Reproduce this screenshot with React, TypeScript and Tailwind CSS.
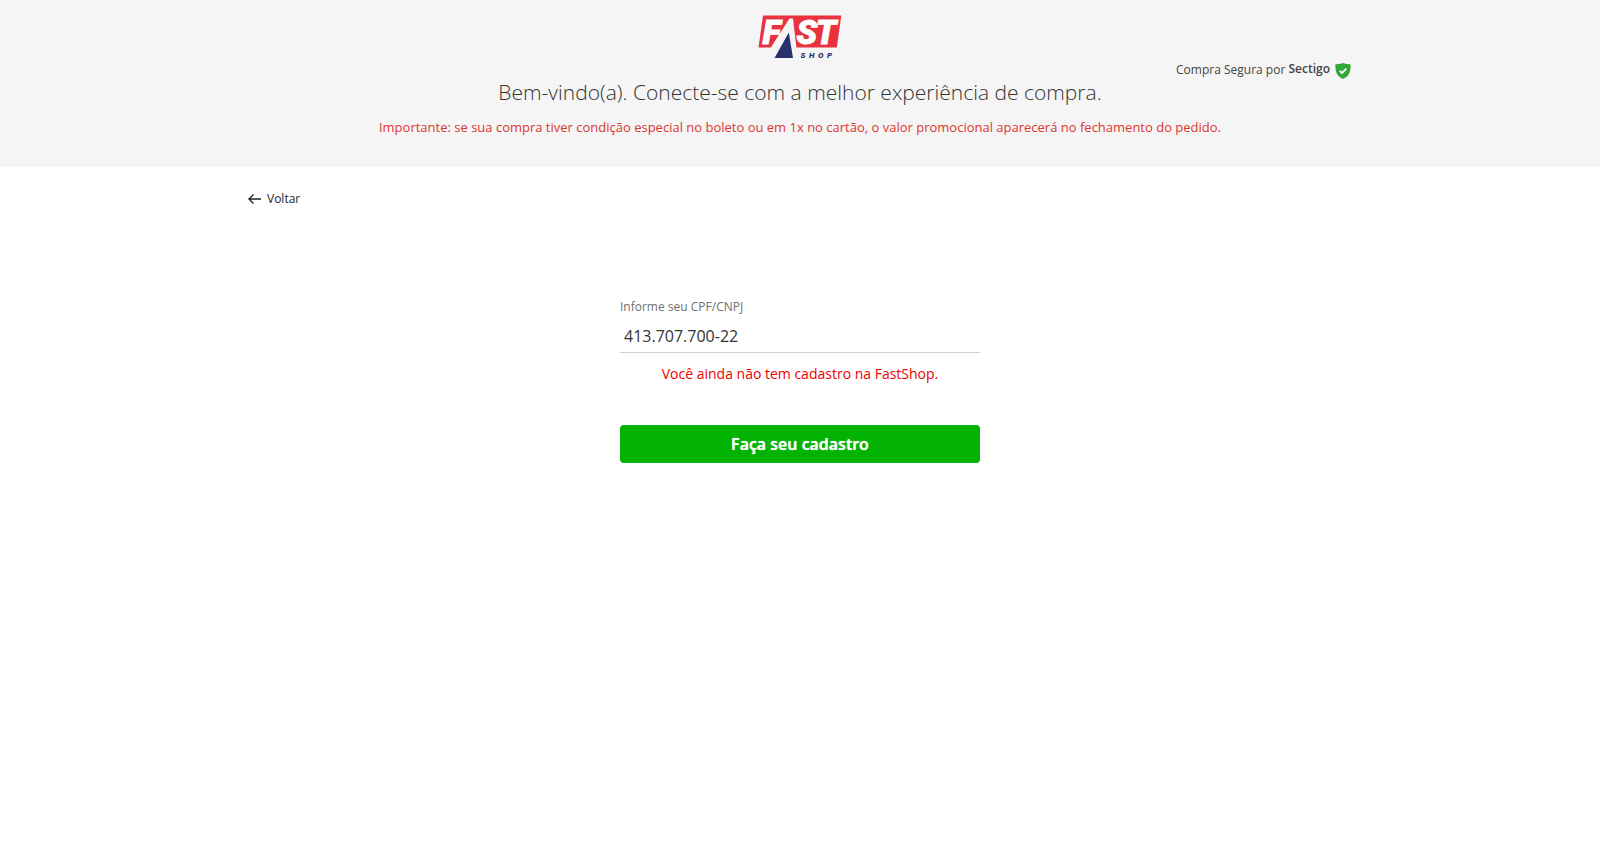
import { useState } from "react";

function FastShopLogo() {
  return (
    <svg viewBox="0 0 84 44" className="h-11 w-21 overflow-visible" role="img" aria-label="Fast Shop">
      <path d="M5 0.5H83.3L78.8 32.5H0.5Z" fill="#e8333f" />
      <g fill="#ffffff" stroke="#ffffff" strokeWidth="0.9" fontFamily="Roboto" fontWeight="900" fontStyle="italic" fontSize="34">
        <text x="4.5" y="28.5">F</text>
        <text x="38.5" y="28.5">S</text>
        <text x="57.5" y="28.5">T</text>
      </g>
      <path d="M31.5 3.5L12.5 33H38.5L35 3.5Z" fill="#f5f5f5" />
      <path d="M30.8 17.5L16.5 43H35Z" fill="#27326f" />
      <text y="42.5" fill="#27326f" fontFamily="Roboto" fontWeight="900" fontStyle="italic" fontSize="8">
        <tspan x="42.5">S</tspan>
        <tspan x="51">H</tspan>
        <tspan x="60">O</tspan>
        <tspan x="69">P</tspan>
      </text>
    </svg>
  );
}

function ShieldIcon() {
  return (
    <svg viewBox="0 0 16 16" className="size-4" aria-hidden="true">
      <path d="M8 0C5.600 1 3 1.400 0.400 1.300C0.200 8.500 1.500 13 8 16C14.500 13 15.800 8.500 15.600 1.300C13 1.400 10.400 1 8 0Z" fill="#32a836" />
      <path d="M4.800 7.800L7 10L11.300 5.600" fill="none" stroke="#ffffff" strokeWidth="1.800" />
    </svg>
  );
}

function BackArrow() {
  return (
    <svg viewBox="0 0 14 10" className="h-2.5 w-3.5" fill="none" stroke="#212529" strokeWidth="1.400" aria-hidden="true">
      <path d="M5.500 0.500L1 5L5.500 9.500M1 5H13" />
    </svg>
  );
}

export default function App() {
  const [cpf, setCpf] = useState("413.707.700-22");

  return (
    <div className="min-h-screen bg-white font-['Open_Sans',sans-serif] text-[#212529]">
      <header className="bg-[#f5f5f5] px-4 pt-[15px] pb-[30px]">
        <div className="mx-auto grid max-w-[1104px] grid-cols-[1fr_auto_1fr] items-start">
          <div className="col-start-2">
            <FastShopLogo />
          </div>
          <p className="col-start-3 flex h-16 items-end justify-end gap-[5px] pr-px text-xs text-[#444444]">
            <span className="flex items-start pb-px">
              <span className="pt-px">Compra Segura por&nbsp;</span>
              <strong className="font-semibold">Sectigo</strong>
            </span>
            <ShieldIcon />
          </p>
        </div>
        <h1 className="-mt-[3px] text-center text-[21px] leading-8 font-light text-[#333333]">
          Bem-vindo(a). Conecte-se com a melhor experiência de compra.
        </h1>
        <p className="mt-[9px] text-center text-[13px] leading-5 text-[#dc3530]">
          Importante: se sua compra tiver condição especial no boleto ou em 1x no cartão, o valor promocional aparecerá no fechamento do pedido.
        </p>
      </header>

      <main className="mx-auto max-w-[1104px] pt-5">
        <a href="#voltar" className="flex w-fit items-center gap-[5px] text-xs leading-6">
          <BackArrow />
          Voltar
        </a>

        <form className="mx-auto mt-[86px] flex max-w-[360px] flex-col" onSubmit={(event) => event.preventDefault()}>
          <label htmlFor="cpf" className="text-xs leading-5 text-[#707070]">
            Informe seu CPF/CNPJ
          </label>
          <input
            id="cpf"
            value={cpf}
            onChange={(event) => setCpf(event.target.value)}
            className="h-9 border-b border-[#d0d0d0] px-1 pt-0.5 text-base text-[#333333] outline-none"
          />
          <p className="mt-[11px] text-center text-sm leading-5 text-[#f00000]">Você ainda não tem cadastro na FastShop.</p>
          <button
            type="submit"
            className="mt-[41px] h-[38px] rounded bg-[#03b303] text-base font-semibold text-white [text-shadow:0_0_1px_#ffffff]"
          >
            Faça seu cadastro
          </button>
        </form>
      </main>
    </div>
  );
}
